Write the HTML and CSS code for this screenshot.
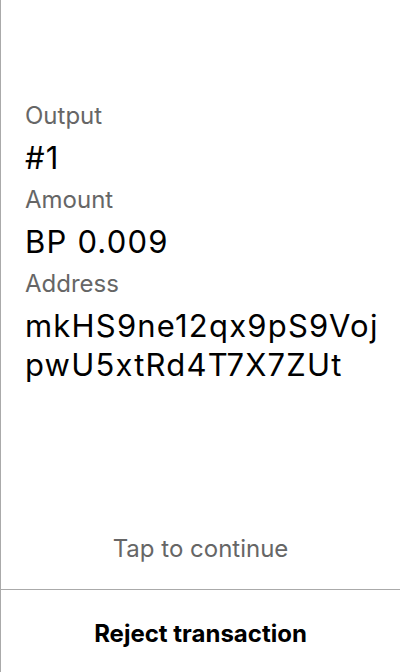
FILE: index.html
```html
<!DOCTYPE html>
<html>
<head>
<meta charset="utf-8">
<link rel="stylesheet" href="styles.css">
</head>
<body>
<div class="screen">
  <div class="content">
    <div class="label">Output</div>
    <div class="value">#1</div>
    <div class="label">Amount</div>
    <div class="value">BP 0.009</div>
    <div class="label">Address</div>
    <div class="value address">mkHS9ne12qx9pS9Voj<br>pwU5xtRd4T7X7ZUt</div>
  </div>
  <div class="tap">Tap to continue</div>
  <div class="footer">
    <div class="reject">Reject transaction</div>
  </div>
</div>
</body>
</html>
```
FILE: styles.css
```css
html, body {
  margin: 0;
  padding: 0;
  background: #fff;
}
.screen {
  width: 400px;
  height: 672px;
  box-sizing: border-box;
  border-left: 1px solid #aaa;
  display: flex;
  flex-direction: column;
  font-family: Inter, "Noto Sans", sans-serif;
  color: #000;
}
.content {
  flex: 1;
  padding: 100px 0 0 24px;
}
.label {
  font-size: 24px;
  line-height: 32px;
  color: #666;
}
.value {
  font-size: 31px;
  line-height: 52px;
  letter-spacing: 1.2px;
}
.address {
  line-height: 39px;
  margin-top: 6px;
}
.tap {
  text-align: center;
  font-size: 24px;
  color: #666;
  line-height: 30px;
  padding-bottom: 25px;
}
.footer {
  border-top: 1px solid #aaa;
  height: 83px;
  box-sizing: border-box;
  padding-top: 5px;
  display: flex;
  align-items: center;
  justify-content: center;
}
.reject {
  font-size: 24px;
  font-weight: 700;
}
```
